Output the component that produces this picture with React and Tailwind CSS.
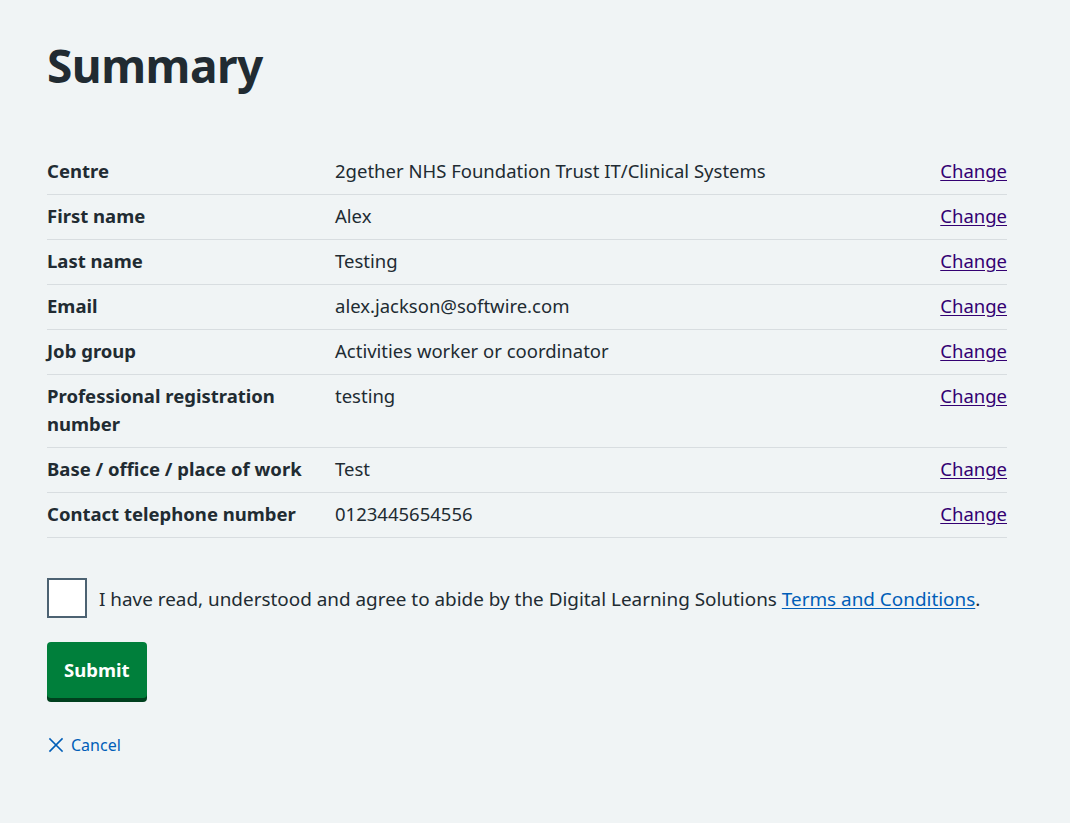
const rows = [
  ["Centre", "2gether NHS Foundation Trust IT/Clinical Systems"],
  ["First name", "Alex"],
  ["Last name", "Testing"],
  ["Email", "alex.jackson@softwire.com"],
  ["Job group", "Activities worker or coordinator"],
  ["Professional registration number", "testing"],
  ["Base / office / place of work", "Test"],
  ["Contact telephone number", "0123445654556"],
];

export default function App() {
  return (
    <div
      className="min-h-screen bg-[#f0f4f5] text-[#212b32] px-[47px] pt-[37px]"
      style={{ fontFamily: '"Noto Sans", "Open Sans", sans-serif' }}
    >
      <div className="w-[960px]">
        <h1 className="text-[46px] leading-[56px] font-bold tracking-[-0.5px] mb-[57px]">Summary</h1>

        <dl className="text-[18.5px] leading-[28px] mb-10">
          {rows.map(([key, value]) => (
            <div key={key} className="flex border-b border-[#d8dde0]">
              <dt className="w-[30%] pr-6 pt-[7px] pb-[9px] font-bold">{key}</dt>
              <dd className="w-[50%] pr-6 pt-[7px] pb-[9px]">{value}</dd>
              <dd className="w-[20%] pt-[7px] pb-[9px] text-right">
                <a href="#" className="text-[#330072] underline underline-offset-2">
                  Change
                </a>
              </dd>
            </div>
          ))}
        </dl>

        <div className="flex items-center gap-3 mb-6">
          <div className="w-10 h-10 bg-white border-2 border-[#4c6272] shrink-0" />
          <p className="text-[18.9px] leading-[28px] pt-[2px]">
            I have read, understood and agree to abide by the Digital Learning Solutions{" "}
            <a href="#" className="text-[#005eb8] underline underline-offset-2">
              Terms and Conditions
            </a>
            .
          </p>
        </div>

        <button className="bg-[#007f3b] text-white font-bold text-[18.5px] leading-[28px] px-[17px] pt-[14px] pb-[14px] rounded-[4px] shadow-[0_4px_0_#00401e]">
          Submit
        </button>

        <div className="mt-[35px]">
          <a href="#" className="inline-flex items-center gap-1.5 text-[#005eb8] text-[16px]">
            <svg width="18" height="18" viewBox="0 0 24 24" fill="none" stroke="currentColor" strokeWidth="2.2" strokeLinecap="square">
              <path d="M4 4l16 16M20 4L4 20" />
            </svg>
            Cancel
          </a>
        </div>
      </div>
    </div>
  );
}
